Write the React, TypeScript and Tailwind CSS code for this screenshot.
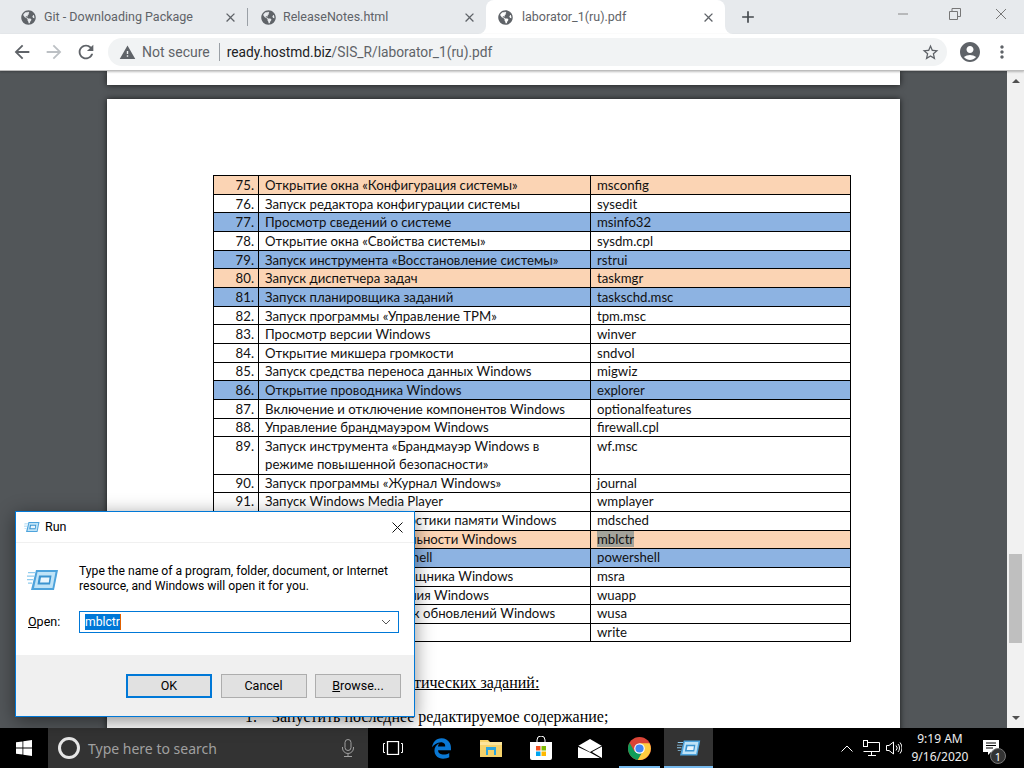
import React from "react";
import { FaGlobeAmericas, FaEdgeLegacy } from "react-icons/fa";
import {
  MdWarning, MdStarBorder, MdAccountCircle, MdMoreVert, MdArrowBack, MdArrowForward, MdRefresh, MdClose, MdAdd,
} from "react-icons/md";

type Row = { n: string; t: React.ReactNode; c: string; h: string; bg?: string; up?: boolean };
const P = "bg-[#fbd4b4]";
const B = "bg-[#8db3e2]";
const rows: Row[] = [
  { n: "75.", t: "Открытие окна «Конфигурация системы»", c: "msconfig", h: "h-[19px]", bg: P },
  { n: "76.", t: "Запуск редактора конфигурации системы", c: "sysedit", h: "h-[18px]" },
  { n: "77.", t: "Просмотр сведений о системе", c: "msinfo32", h: "h-[19px]", bg: B },
  { n: "78.", t: "Открытие окна «Свойства системы»", c: "sysdm.cpl", h: "h-[19px]" },
  { n: "79.", t: "Запуск инструмента «Восстановление системы»", c: "rstrui", h: "h-[18px]", bg: B },
  { n: "80.", t: "Запуск диспетчера задач", c: "taskmgr", h: "h-[19px]", bg: P },
  { n: "81.", t: "Запуск планировщика заданий", c: "taskschd.msc", h: "h-[19px]", bg: B },
  { n: "82.", t: "Запуск программы «Управление TPM»", c: "tpm.msc", h: "h-[18px]" },
  { n: "83.", t: "Просмотр версии Windows", c: "winver", h: "h-[19px]" },
  { n: "84.", t: "Открытие микшера громкости", c: "sndvol", h: "h-[19px]" },
  { n: "85.", t: "Запуск средства переноса данных Windows", c: "migwiz", h: "h-[18px]", up: true },
  { n: "86.", t: "Открытие проводника Windows", c: "explorer", h: "h-[19px]", bg: B },
  { n: "87.", t: "Включение и отключение компонентов Windows", c: "optionalfeatures", h: "h-[19px]" },
  { n: "88.", t: "Управление брандмауэром Windows", c: "firewall.cpl", h: "h-[18px]", up: true },
  { n: "89.", t: <>Запуск инструмента «Брандмауэр Windows в<br />режиме повышенной безопасности»</>, c: "wf.msc", h: "h-[38px]" },
  { n: "90.", t: "Запуск программы «Журнал Windows»", c: "journal", h: "h-[18px]", up: true },
  { n: "91.", t: "Запуск Windows Media Player", c: "wmplayer", h: "h-[19px]", up: true },
  { n: "92.", t: "Запуск программ диагностики памяти Windows", c: "mdsched", h: "h-[19px]", up: true },
  { n: "93.", t: "Открытие центра мобильности Windows", c: "mblctr", h: "h-[18px]", bg: P, up: true },
  { n: "94.", t: "Запуск Windows PowerShell", c: "powershell", h: "h-[19px]", bg: B, up: true },
  { n: "95.", t: "Запуск удаленного помощника Windows", c: "msra", h: "h-[19px]", up: true },
  { n: "96.", t: "Запуск Центра обновления Windows", c: "wuapp", h: "h-[18px]", up: true },
  { n: "97.", t: "Автономный установщик обновлений Windows", c: "wusa", h: "h-[19px]", up: true },
  { n: "98.", t: "Запуск WordPad", c: "write", h: "h-[18px]", up: true },
];

function RunIcon({ size }: { size: number }) {
  return (
    <svg width={size} height={size} viewBox="0 0 32 32">
      <path d="M9 6h22l-4 20H4z" fill="#4da3dc" />
      <path d="M10.5 8h18l-3 16H7z" fill="#bfe3f7" />
      <path d="M12 11.5h12.5l-1.5 9H10.5z" fill="#3b94d0" />
      <path d="M14 13.5h8.5l-.7 5H13z" fill="#eaf6fd" />
      <path d="M1 8h7v1.2H1zM0 11.5h7v1.2H0zM0 15h6v1.2H0zM1 18.5h4v1.2H1z" fill="#8fcbee" />
    </svg>
  );
}

function Tab({ title, w, ml, gap, active }: { title: string; w: string; ml: string; gap: string; active?: boolean }) {
  return (
    <div className={`${w} h-[34px] flex items-center ${active ? "bg-white rounded-t-lg" : ""}`}>
      <FaGlobeAmericas className={`${ml} shrink-0 text-[#5f6368]`} size={15} />
      <span className={`${gap} text-[12.5px] text-[#5f6368] flex-1 whitespace-nowrap`}>{title}</span>
      <MdClose className="mr-[9px] shrink-0 text-[#5f6368]" size={15} />
    </div>
  );
}

function Chrome() {
  return (
    <div className="shrink-0 font-['Roboto',sans-serif]">
      <div className="h-[34px] bg-white flex items-start">
        <div className="h-[34px] bg-[#e7eaed] rounded-br-lg flex items-start">
          <Tab title="Git - Downloading Package" w="w-[247px]" ml="ml-[21px]" gap="ml-[8px]" />
          <div className="w-px h-[18px] mt-[8px] bg-[#9aa0a6]" />
          <Tab title="ReleaseNotes.html" w="w-[238px]" ml="ml-[13px]" gap="ml-[7px]" />
        </div>
        <div className="bg-[#e7eaed]">
          <Tab title="laborator_1(ru).pdf" active w="w-[239px]" ml="ml-[12px]" gap="ml-[9px]" />
        </div>
        <div className="flex-1 h-[34px] bg-[#e7eaed] rounded-bl-lg flex items-start">
          <MdAdd className="ml-[13px] mt-[7px] text-[#45494e]" size={20} />
          <div className="ml-auto flex items-center h-[28px]">
            <svg width="12" height="12" viewBox="0 0 12 12" className="mr-[40px]"><path d="M1 6h10" stroke="#888" /></svg>
            <svg width="12" height="12" viewBox="0 0 12 12" className="mr-[34px]"><path d="M.5 3.5h8v8h-8zM3 3.5V.5h8.500v8H8.500" stroke="#777" fill="none" /></svg>
            <svg width="12" height="12" viewBox="0 0 12 12" className="mr-[17px]"><path d="M1 1l10 10M11 1L1 11" stroke="#777" /></svg>
          </div>
        </div>
      </div>
      <div className="h-[37px] bg-white border-b border-[#bdbdbd] flex items-center relative z-10 shadow-[0_1px_2px_rgba(0,0,0,0.25)]">
        <MdArrowBack className="ml-[11px] text-[#5f6368]" size={22} />
        <MdArrowForward className="ml-[10px] text-[#bcc0c4]" size={22} />
        <MdRefresh className="ml-[10px] text-[#5f6368]" size={22} />
        <div className="ml-[11px] w-[839px] h-[28px] rounded-full bg-[#f1f3f4] flex items-center">
          <MdWarning className="ml-[11px] text-[#5f6368]" size={17} />
          <span className="ml-[6px] text-[14px] text-[#5f6368]">Not secure</span>
          <div className="ml-[9px] w-px h-[18px] bg-[#9aa0a6]" />
          <span className="ml-[7px] text-[13.750px] text-[#202124] whitespace-nowrap">
            ready.hostmd.biz<span className="text-[#5f6368]">/SIS_R/laborator_1(ru).pdf</span>
          </span>
          <MdStarBorder className="ml-auto mr-[7px] text-[#5f6368]" size={19} />
        </div>
        <MdAccountCircle className="ml-[11px] text-[#5f6368]" size={24} />
        <MdMoreVert className="ml-[10px] text-[#5f6368]" size={20} />
      </div>
    </div>
  );
}

function Table() {
  return (
    <div className="ml-[106px] w-[638px] border-b border-black font-['Lato',sans-serif] text-[13.2px] text-[#111]">
      {rows.map((r) => {
        const lh = r.up ? "leading-[16px]" : "leading-[18px]";
        return (
          <div key={r.n} className={`grid grid-cols-[44px_332px_1fr] border-t border-x border-black ${r.h} ${r.bg ?? ""}`}>
            <div className={`text-right pr-[4px] ${lh}`}>{r.n}</div>
            <div className={`border-l border-black pl-[6px] ${lh} whitespace-nowrap`}>{r.t}</div>
            <div className={`border-l border-black pl-[6px] ${lh}`}>
              {r.c === "mblctr" ? <span className="bg-[#a3a39a]">{r.c}</span> : r.c}
            </div>
          </div>
        );
      })}
    </div>
  );
}

function Pdf() {
  return (
    <div className="flex-1 h-full bg-[#525659] overflow-hidden">
      <div className="mx-[107px] h-[14px] bg-white shadow-[0_0_6px_rgba(0,0,0,0.7)]" />
      <div className="mx-[107px] mt-[14px] h-[700px] bg-white shadow-[0_0_6px_rgba(0,0,0,0.7)] pt-[76px]">
        <Table />
        <div className="font-['Liberation_Serif',serif] text-[16px] text-black">
          <p className="mt-[31px] ml-[129px] leading-[20px] underline">Условия выполнения практических заданий:</p>
          <div className="mt-[14px] ml-[138px] flex leading-[20px]">
            <span className="w-[27px]">1.</span>
            <span>Запустить последнее редактируемое содержание;</span>
          </div>
        </div>
      </div>
    </div>
  );
}

function Scrollbar() {
  return (
    <div className="w-[17px] h-full bg-[#f1f1f1] flex flex-col items-center shrink-0">
      <div className="mt-[8px] w-0 h-0 border-x-[4px] border-x-transparent border-b-[4px] border-b-[#505050]" />
      <div className="mt-[471px] w-[13px] h-[89px] bg-[#bfbfbf]" />
      <div className="mt-[73px] w-0 h-0 border-x-[4px] border-x-transparent border-t-[4px] border-t-[#505050]" />
    </div>
  );
}

function DlgButton({ children, def }: { children: React.ReactNode; def?: boolean }) {
  return (
    <div className={`w-[86px] h-[24px] flex items-center justify-center text-[12.500px] text-black bg-[#e1e1e1] ${def ? "border-2 border-[#0078d7]" : "border border-[#adadad]"}`}>
      {children}
    </div>
  );
}

function RunDialog() {
  return (
    <div className="absolute left-[15px] top-[511px] w-[400px] h-[206px] bg-white border border-[#0078d7] shadow-[0_4px_18px_rgba(0,0,0,0.45)] flex flex-col font-['Roboto',sans-serif] text-black">
      <div className="h-[31px] flex items-center border-b border-[#f0f0f0] shrink-0">
        <span className="ml-[8px]"><RunIcon size={16} /></span>
        <span className="ml-[5px] text-[12.500px]">Run</span>
        <svg width="11" height="11" viewBox="0 0 11 11" className="ml-auto mr-[11px]"><path d="M.5.5l10 10M10.500.5l-10 10" stroke="#111" /></svg>
      </div>
      <div className="flex-1">
        <div className="flex mt-[21px]">
          <span className="ml-[11px] w-[52px]"><RunIcon size={32} /></span>
          <p className="text-[12.150px] leading-[15px] whitespace-nowrap">
            Type the name of a program, folder, document, or Internet<br />resource, and Windows will open it for you.
          </p>
        </div>
        <div className="flex items-center mt-[15px]">
          <span className="ml-[12px] w-[51px] text-[12.500px]"><u>O</u>pen:</span>
          <div className="w-[320px] h-[22px] border border-[#0078d7] flex items-center pl-[5px] pr-[5px]">
            <span className="bg-[#0078d7] text-white text-[12.150px] leading-[16px] border-r border-[#e06000]">mblctr</span>
            <svg width="10" height="6" viewBox="0 0 10 6" className="ml-auto mr-[2px]"><path d="M1 1l4 4 4-4" stroke="#555" fill="none" /></svg>
          </div>
        </div>
      </div>
      <div className="h-[61px] bg-[#f0f0f0] shrink-0 flex items-start pt-[19px] pl-[110px] gap-[8.500px]">
        <DlgButton def>OK</DlgButton>
        <DlgButton>Cancel</DlgButton>
        <DlgButton><u>B</u>rowse...</DlgButton>
      </div>
    </div>
  );
}

function TaskIcon({ children, active, open }: { children: React.ReactNode; active?: boolean; open?: boolean }) {
  return (
    <div className={`w-[49.330px] h-[40px] flex items-center justify-center relative shrink-0 ${active ? "bg-[#333333]" : ""}`}>
      {children}
      {active && <div className="absolute bottom-0 inset-x-0 h-[2px] bg-[#76b9ed]" />}
      {open && <div className="absolute bottom-0 inset-x-[4px] h-[2px] bg-[#76b9ed]" />}
    </div>
  );
}

function Taskbar() {
  return (
    <div className="h-[40px] bg-black flex items-center shrink-0 font-['Noto_Sans',sans-serif] text-white">
      <div className="w-[48px] flex justify-center">
        <svg width="16" height="16" viewBox="0 0 16 16" fill="#fff">
          <path d="M0 2.300l6.500-.9v6.200H0zM7.300 1.300L16 0v7.600H7.300zM0 8.400h6.500v6.200L0 13.700zM7.300 8.400H16V16l-8.700-1.200z" />
        </svg>
      </div>
      <div className="w-[320px] h-[40px] bg-[#333333] flex items-center">
        <div className="ml-[10px] w-[22px] h-[22px] rounded-full border-[3px] border-[#e6e6e6]" />
        <span className="ml-[8px] text-[14px] text-[#a0a0a0]">Type here to search</span>
        <svg width="12" height="18" viewBox="0 0 12 18" className="ml-auto mr-[14px]" fill="none" stroke="#a0a0a0">
          <rect x="3" y=".5" width="6" height="11" rx="3" />
          <path d="M.5 8v1a5.500 5.500 0 0 0 11 0V8M6 15v2.500M2 17.500h8" />
        </svg>
      </div>
      <TaskIcon>
        <svg width="20" height="14" viewBox="0 0 20 14" fill="none" stroke="#fff">
          <rect x="4.500" y=".5" width="11" height="13" strokeWidth="1.300" />
          <path d="M2 2.500H.5v9H2M18 2.500h1.500v9H18" />
        </svg>
      </TaskIcon>
      <TaskIcon><FaEdgeLegacy size={21} className="text-[#0a78d4]" /></TaskIcon>
      <TaskIcon>
        <svg width="22" height="18" viewBox="0 0 22 18">
          <path d="M0 1h8l2 2h12v15H0z" fill="#f6d36b" />
          <path d="M0 3h22v3H0z" fill="#fbe49b" />
          <path d="M6 8h10v3H6z" fill="#2ba6e0" />
          <path d="M8 11h6v5H8z" fill="#f6d36b" />
          <path d="M6 11h2v5H6zM14 11h2v5h-2z" fill="#2ba6e0" />
        </svg>
      </TaskIcon>
      <TaskIcon>
        <svg width="24" height="24" viewBox="0 0 24 24">
          <path d="M8 7V4a4 4 0 0 1 8 0v3" fill="none" stroke="#fff" />
          <path d="M1 6h22v16a2 2 0 0 1-2 2H3a2 2 0 0 1-2-2z" fill="#fff" />
          <path d="M7 10h4.500v4.500H7z" fill="#f25022" />
          <path d="M12.500 10H17v4.500h-4.500z" fill="#7fba00" />
          <path d="M7 15.500h4.500V20H7z" fill="#00a4ef" />
          <path d="M12.500 15.500H17V20h-4.500z" fill="#ffb900" />
        </svg>
      </TaskIcon>
      <TaskIcon>
        <svg width="24" height="19" viewBox="0 0 24 19">
          <path d="M0 7L12 0l12 7v12H0z" fill="#fff" />
          <path d="M0 6.500l12 6.500 12-6.500v1L14 13l10 6h-2l-10-5.500L0 8z" fill="#000" />
        </svg>
      </TaskIcon>
      <TaskIcon open>
        <svg width="23" height="23" viewBox="0 0 24 24">
          <circle cx="12" cy="12" r="12" fill="#db4437" />
          <path d="M1.600 6A12 12 0 0 0 10.200 23.900L15.400 15 6.800 15z" fill="#0f9d58" />
          <path d="M22.400 6.500H12l3.400 8.500-5.200 8.900A12 12 0 0 0 22.400 6.500z" fill="#ffcd40" />
          <circle cx="12" cy="12" r="5.500" fill="#fff" />
          <circle cx="12" cy="12" r="4.300" fill="#4285f4" />
        </svg>
      </TaskIcon>
      <TaskIcon active><RunIcon size={24} /></TaskIcon>
      <div className="ml-auto flex items-center h-full">
        <svg width="12" height="7" viewBox="0 0 12 7" className="mr-[10px]" fill="none" stroke="#fff"><path d="M.5 6.500l5.500-5.500 5.500 5.500" /></svg>
        <svg width="17" height="16" viewBox="0 0 17 16" className="mr-[6px]" fill="none" stroke="#fff">
          <path d="M3 2.500h13.500v9H.5M8.500 11.500V15M5 15.500h8" />
          <rect x=".5" y=".5" width="4" height="6" fill="#000" />
        </svg>
        <svg width="16" height="14" viewBox="0 0 16 14" className="mr-[7px]" fill="none" stroke="#fff">
          <path d="M.5 4.500H3L7.500 1v12L3 9.500H.5z" />
          <path d="M10 4.500a3.500 3.500 0 0 1 0 5M12 3a6 6 0 0 1 0 8M14 1.500a8.500 8.500 0 0 1 0 11" />
        </svg>
        <div className="w-[62px] text-center text-[12px] leading-[18px] text-[#eee] whitespace-nowrap mr-[12px]">
          <div>9:19 AM</div>
          <div>9/16/2020</div>
        </div>
        <div className="relative w-[17px] h-[16px] mr-[24px]">
          <svg width="16" height="15" viewBox="0 0 16 15">
            <path d="M0 0h16v12H8l-3 3v-3H0z" fill="#fff" />
            <path d="M3 3h10M3 5.500h10M3 8h7" stroke="#000" />
          </svg>
          <div className="absolute left-[7px] top-[8px] w-[16px] h-[16px] rounded-full bg-[#333] border border-[#777] flex items-center justify-center text-[11px] leading-none">1</div>
        </div>
      </div>
    </div>
  );
}

export default function App() {
  return (
    <div className="relative w-[1024px] h-[768px] overflow-hidden flex flex-col">
      <Chrome />
      <div className="flex-1 flex min-h-0">
        <Pdf />
        <Scrollbar />
      </div>
      <Taskbar />
      <RunDialog />
    </div>
  );
}
